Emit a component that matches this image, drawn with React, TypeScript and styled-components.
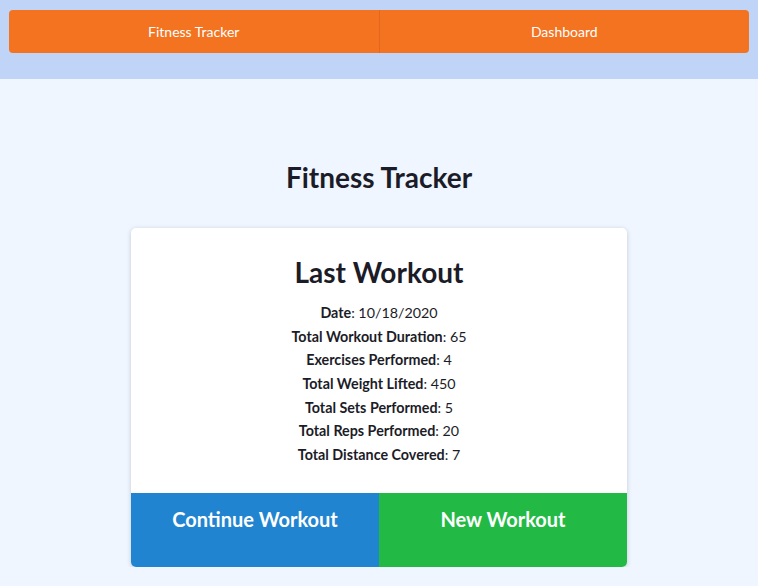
import React from "react";
import styled, { createGlobalStyle } from "styled-components";

const GlobalStyle = createGlobalStyle`
  html, body {
    margin: 0;
    padding: 0;
    background: #eff6ff;
    font-family: Lato, "Open Sans", sans-serif;
    color: #1c1c28;
  }
  * { box-sizing: border-box; }
`;

const Header = styled.header`
  background: #bfd4f6;
  height: 79px;
  padding: 10px 9px 0 9px;
`;

const Nav = styled.nav`
  display: flex;
  height: 43px;
  background: #f37321;
  border-radius: 4px;
  overflow: hidden;
`;

const NavItem = styled.a<{ $divider?: boolean }>`
  flex: 1;
  display: flex;
  align-items: center;
  justify-content: center;
  color: #ffffff;
  font-size: 14px;
  text-decoration: none;
  border-left: ${(p) => (p.$divider ? "1px solid #e0691e" : "none")};
`;

const Main = styled.main`
  display: flex;
  flex-direction: column;
  align-items: center;
  padding-top: 80px;
`;

const Title = styled.h1`
  margin: 0 0 33px 0;
  font-size: 28px;
  font-weight: 700;
  line-height: 36px;
`;

const Card = styled.section`
  width: 496px;
  background: #ffffff;
  border-radius: 5px;
  box-shadow: 0 1px 5px rgba(0, 0, 0, 0.18);
  overflow: hidden;
`;

const CardBody = styled.div`
  display: flex;
  flex-direction: column;
  align-items: center;
  padding: 25px 0 26px 0;
`;

const CardTitle = styled.h2`
  margin: 0 0 10px 0;
  font-size: 28px;
  font-weight: 700;
  line-height: 38px;
`;

const StatRow = styled.div`
  font-size: 14.3px;
  line-height: 23.67px;
`;

const Label = styled.strong`
  font-weight: 700;
`;

const Actions = styled.div`
  display: grid;
  grid-template-columns: 1fr 1fr;
  height: 74px;
`;

const ActionButton = styled.button<{ $color: string }>`
  border: none;
  margin: 0;
  background: ${(p) => p.$color};
  color: #ffffff;
  font-family: Lato, "Open Sans", sans-serif;
  font-size: 20px;
  font-weight: 700;
  line-height: 24px;
  display: flex;
  justify-content: center;
  align-items: flex-start;
  padding-top: 14px;
  cursor: pointer;
`;

const stats: [string, string][] = [
  ["Date", "10/18/2020"],
  ["Total Workout Duration", "65"],
  ["Exercises Performed", "4"],
  ["Total Weight Lifted", "450"],
  ["Total Sets Performed", "5"],
  ["Total Reps Performed", "20"],
  ["Total Distance Covered", "7"],
];

export default function App() {
  return (
    <>
      <GlobalStyle />
      <Header>
        <Nav>
          <NavItem href="#">Fitness Tracker</NavItem>
          <NavItem href="#" $divider>
            Dashboard
          </NavItem>
        </Nav>
      </Header>
      <Main>
        <Title>Fitness Tracker</Title>
        <Card>
          <CardBody>
            <CardTitle>Last Workout</CardTitle>
            {stats.map(([label, value]) => (
              <StatRow key={label}>
                <Label>{label}</Label>: {value}
              </StatRow>
            ))}
          </CardBody>
          <Actions>
            <ActionButton $color="#2184d0">Continue Workout</ActionButton>
            <ActionButton $color="#22ba45">New Workout</ActionButton>
          </Actions>
        </Card>
      </Main>
    </>
  );
}
